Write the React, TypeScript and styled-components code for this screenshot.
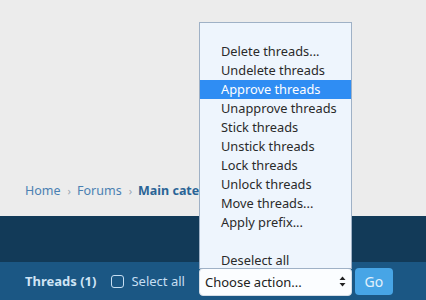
import React from "react";
import styled, { createGlobalStyle } from "styled-components";

const Global = createGlobalStyle`
  html, body { margin: 0; padding: 0; }
  body {
    width: 426px;
    height: 300px;
    overflow: hidden;
    font-family: "Noto Sans", "Open Sans", sans-serif;
    background: #ececec;
  }
`;

const Page = styled.div`
  position: relative;
  width: 426px;
  height: 300px;
  display: flex;
  flex-direction: column;
`;

const TopArea = styled.div`
  height: 216px;
  background: #ececec;
  display: flex;
  align-items: flex-end;
  padding: 0 0 17px 25px;
  box-sizing: border-box;
  overflow: hidden;
`;

const Crumbs = styled.nav`
  display: flex;
  align-items: center;
  font-size: 12.5px;
  color: #4a80b2;
  white-space: nowrap;
  width: 174px;
  overflow: hidden;
`;

const Crumb = styled.span<{ $current?: boolean }>`
  font-weight: ${(p) => (p.$current ? 700 : 400)};
  color: ${(p) => (p.$current ? "#2a6496" : "#4a80b2")};
`;

const Sep = styled.span`
  color: #9aa6b2;
  font-size: 11px;
  margin: 0 6px 0 7px;
`;

const Band = styled.div`
  height: 46px;
  background: #123a58;
`;

const Bar = styled.div`
  flex: 1;
  background: #1b5784;
  display: flex;
  align-items: center;
  padding: 0 0 0 25px;
  box-sizing: border-box;
`;

const BarTitle = styled.span`
  font-weight: 700;
  font-size: 13px;
  color: #cfe4f5;
  margin-right: 15px;
`;

const CheckLabel = styled.label`
  display: flex;
  align-items: center;
  gap: 7px;
  font-size: 13px;
  color: #c6def2;
  margin-right: 14px;
`;

const Box = styled.span`
  width: 11px;
  height: 11px;
  border: 1.5px solid #c6def2;
  border-radius: 3px;
`;

const Select = styled.div`
  width: 153px;
  height: 28px;
  box-sizing: border-box;
  background: #fbfdff;
  border-radius: 4px;
  border: 1px solid #d5dde6;
  display: flex;
  align-items: center;
  justify-content: space-between;
  padding: 0 5px 0 5px;
  font-size: 13px;
  color: #222;
  margin-top: 1px;
`;

const Arrows = styled.svg`
  width: 7px;
  height: 11px;
`;

const GoButton = styled.button`
  margin-left: 3px;
  width: 38px;
  height: 27px;
  border: none;
  border-radius: 4px;
  background: #47a5e6;
  color: #e3f1fc;
  font-family: inherit;
  font-size: 14px;
  padding: 0;
`;

const Menu = styled.ul`
  position: absolute;
  left: 199px;
  top: 22px;
  width: 153px;
  height: 247px;
  box-sizing: border-box;
  margin: 0;
  padding: 0;
  list-style: none;
  background: #eef5fd;
  border: 1px solid #9fb1c6;
  overflow: hidden;
`;

const Item = styled.li<{ $active?: boolean }>`
  height: 19px;
  line-height: 18px;
  padding-left: 21px;
  font-size: 12.8px;
  white-space: nowrap;
  color: ${(p) => (p.$active ? "#ffffff" : "#2a2a2a")};
  background: ${(p) => (p.$active ? "#2f8df3" : "transparent")};
`;

const options = [
  "",
  "Delete threads...",
  "Undelete threads",
  "Approve threads",
  "Unapprove threads",
  "Stick threads",
  "Unstick threads",
  "Lock threads",
  "Unlock threads",
  "Move threads...",
  "Apply prefix...",
  "",
  "Deselect all",
];

export default function App() {
  return (
    <>
      <Global />
      <Page>
        <TopArea>
          <Crumbs>
            <Crumb>Home</Crumb>
            <Sep>›</Sep>
            <Crumb>Forums</Crumb>
            <Sep>›</Sep>
            <Crumb $current>Main category</Crumb>
          </Crumbs>
        </TopArea>
        <Band />
        <Bar>
          <BarTitle>Threads (1)</BarTitle>
          <CheckLabel>
            <Box />
            Select all
          </CheckLabel>
          <Select>
            <span>Choose action...</span>
            <Arrows viewBox="0 0 7 11">
              <path d="M3.5 0.5 L6.5 4 H0.5 Z" fill="#222" />
              <path d="M3.5 10.5 L6.5 7 H0.5 Z" fill="#222" />
            </Arrows>
          </Select>
          <GoButton>Go</GoButton>
        </Bar>
        <Menu>
          {options.map((o, i) => (
            <Item key={i} $active={o === "Approve threads"}>
              {o || "\u00a0"}
            </Item>
          ))}
        </Menu>
      </Page>
    </>
  );
}
